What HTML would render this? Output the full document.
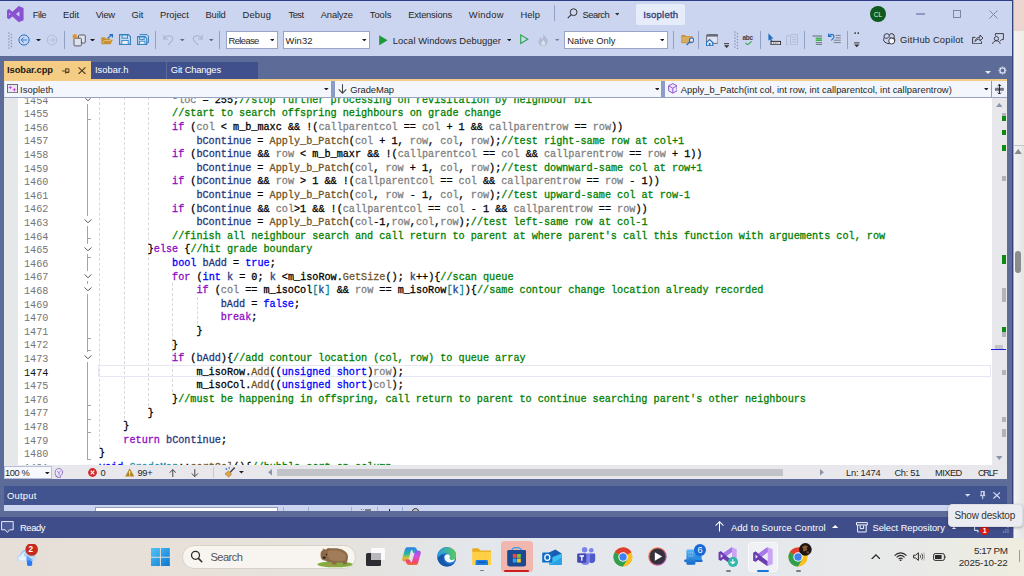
<!DOCTYPE html>
<html lang="en"><head><meta charset="utf-8"><title>Isopleth - Microsoft Visual Studio</title>
<style>
html,body{margin:0;padding:0;}
body{width:1024px;height:576px;overflow:hidden;background:#f3f0ec;font-family:'Liberation Sans',sans-serif;}
#root{position:relative;width:1024px;height:576px;overflow:hidden;}
#root>div,#root>svg,#root>span{position:absolute;display:block;}
.t{white-space:pre;line-height:20px;height:20px;}
#code{position:absolute;left:0;top:0;width:1024px;height:576px;font-family:'Liberation Mono',monospace;font-size:10.17px;-webkit-text-stroke:0.28px;}
#clip{position:absolute;left:4px;top:97px;width:988px;height:368.3px;overflow:hidden;clip-path:inset(1.2px 0 0 0);}
.ln,.cl{position:absolute;white-space:pre;line-height:20px;height:20px;}
.ln{color:#757575;-webkit-text-stroke:0;}
.cl{color:#000;}
.k{color:#8f08c4}.b{color:#0000ff}.p{color:#808080}.v{color:#1f377f}.f{color:#74531f}.c{color:#008000}.y{color:#2b91af}.o{color:#008b8b}

</style></head>
<body>
<div id="root">
<div style="left:1013px;top:0px;width:11px;height:31.4px;background:#eed6d0;"></div>
<div style="left:1013px;top:31.4px;width:11px;height:114px;background:linear-gradient(90deg,#f6f3f0,#efebe8);"></div>
<div style="left:1013px;top:145.2px;width:11px;height:393px;background:linear-gradient(90deg,#f5f5f5,#e4e4e4);"></div>
<div style="left:1013px;top:144.8px;width:11px;height:0.9px;background:#c4c4c4;"></div>
<div style="left:1014.8px;top:250.8px;width:6.4px;height:22.5px;background:#8c8c8c;border-radius:3.2px;"></div>
<svg style="left:1013.8px;top:148.6px;" width="8.4" height="5.6" viewBox="0 0 8.4 5.6"><path d="M0 5.6L4.2 0L8.4 5.6Z" fill="#8a8a8a"/></svg>
<div style="left:0px;top:0px;width:1013px;height:56px;background:#ccd5f0;"></div>
<div style="left:0px;top:0px;width:1013px;height:1.2px;background:#2c3f86;"></div>
<div style="left:0px;top:56px;width:1013px;height:482px;background:#5d6b99;"></div>
<div style="left:1011.9px;top:0px;width:1.2px;height:537.6px;background:#33437c;"></div>
<div style="left:1013px;top:0px;width:0.8px;height:537.6px;background:#a4a9bc;"></div>
<div style="left:3.5px;top:61px;width:87.2px;height:19.6px;background:#f5cc84;"></div>
<div style="left:91.2px;top:62px;width:74.8px;height:17px;background:#40508d;"></div>
<div style="left:167px;top:62px;width:90.5px;height:17px;background:#40508d;"></div>
<div style="left:3.5px;top:79px;width:1003px;height:1.7px;background:#f5cc84;"></div>
<div style="left:3.5px;top:80.7px;width:1003px;height:17.2px;background:#f3f6fd;"></div>
<div style="left:3.5px;top:96.9px;width:1003px;height:1.3px;background:#98a3c2;"></div>
<div style="left:330.6px;top:80.7px;width:4.3px;height:16px;background:#8b9cc6;"></div>
<div style="left:661.1px;top:80.7px;width:3.6px;height:16px;background:#8b9cc6;"></div>
<div style="left:990.6px;top:80.7px;width:1.6px;height:16px;background:#8c99c0;"></div>
<div style="left:992.2px;top:80.7px;width:14.3px;height:16px;background:#eef1fb;"></div>
<div style="left:3.5px;top:80.7px;width:1px;height:16px;background:#dfe5f5;"></div>
<div style="left:3.5px;top:97.9px;width:988.5px;height:367.6px;background:#ffffff;"></div>
<div style="left:3.5px;top:97.9px;width:14px;height:367.6px;background:#e6e7e8;"></div>
<div style="left:992px;top:97.9px;width:14.5px;height:367.6px;background:#e8e8ec;"></div>
<div style="left:3.5px;top:465.3px;width:1003px;height:14px;background:#e8e8ec;"></div>
<div style="left:4px;top:466px;width:47.5px;height:12.6px;background:#f6f8fd;border:1px solid #b8c0d8;box-sizing:border-box;"></div>
<div style="left:277px;top:469px;width:506px;height:7px;background:#c2c3c9;"></div>
<div style="left:3.5px;top:486.2px;width:1003px;height:18.5px;background:#41548f;"></div>
<div style="left:3.5px;top:504.7px;width:1003px;height:6.6px;background:#ccd5f0;"></div>
<div style="left:94.5px;top:507px;width:183.5px;height:4.3px;background:#ffffff;border:1px solid #8e9bbc;border-bottom:none;box-sizing:border-box;"></div>
<div style="left:0px;top:517.2px;width:1013px;height:20.4px;background:#3f4e8b;"></div>
<div style="left:0px;top:537.6px;width:1024px;height:38.4px;background:linear-gradient(90deg,#e5dfd7 0%,#e7e1d9 20%,#e5e3df 36%,#e3e6ea 46%,#e5e8ec 75%,#e9eae8 90%,#efedde 100%);"></div>
<div style="left:553.9px;top:5px;width:1px;height:15.8px;background:#8fa1c6;"></div>
<div style="left:636.3px;top:3.9px;width:48.8px;height:20.8px;background:#e7ecfb;border-radius:2px;"></div>
<div style="left:916px;top:13.3px;width:8.5px;height:1.3px;background:#8c9ac4;"></div>
<div style="left:953px;top:9.8px;width:8.4px;height:8.4px;background:transparent;border:1px solid #7d86a3;box-sizing:border-box;"></div>
<svg style="left:989px;top:10px;" width="9" height="9" viewBox="0 0 9 9"><path d="M0.5 0.5L8.5 8.5M8.5 0.5L0.5 8.5" stroke="#7d86a3" stroke-width="1" fill="none"/></svg>
<div style="left:870.2px;top:6px;width:16px;height:16px;background:#0f5a1e;border-radius:50%;"></div>
<div style="left:226px;top:30.8px;width:51.5px;height:18.2px;background:#ffffff;border:1px solid #98a4c6;box-sizing:border-box;"></div>
<div style="left:283px;top:30.8px;width:87px;height:18.2px;background:#ffffff;border:1px solid #98a4c6;box-sizing:border-box;"></div>
<div style="left:564px;top:30.8px;width:104px;height:18.2px;background:#ffffff;border:1px solid #98a4c6;box-sizing:border-box;"></div>
<div style="left:63.5px;top:31px;width:1px;height:17.5px;background:#8fa1c6;"></div>
<div style="left:154.5px;top:31px;width:1px;height:17.5px;background:#8fa1c6;"></div>
<div style="left:219.0px;top:31px;width:1px;height:17.5px;background:#8fa1c6;"></div>
<div style="left:673.0px;top:31px;width:1px;height:17.5px;background:#8fa1c6;"></div>
<div style="left:698.0px;top:31px;width:1px;height:17.5px;background:#8fa1c6;"></div>
<div style="left:760.0px;top:31px;width:1px;height:17.5px;background:#8fa1c6;"></div>
<div style="left:803.5px;top:31px;width:1px;height:17.5px;background:#8fa1c6;"></div>
<div style="left:847.0px;top:31px;width:1px;height:17.5px;background:#8fa1c6;"></div>
<div style="left:181.6px;top:544.6px;width:174.7px;height:24.2px;background:#f8f4ef;border-radius:12.2px;border:1px solid #d9d2c8;box-sizing:border-box;"></div>
<svg style="left:7px;top:5.8px;" width="17" height="16.2" viewBox="0 0 17 16.2"><path fill-rule="evenodd" fill="#8a52d2" d="M11.7 0L16.6 2V14.2L11.7 16.2L5.4 10.4L2 13.2L0 12V4.2L2 3L5.4 5.8Z M12.4 5.5V10.7L9 8.1Z M2 6.9L3.4 8.1L2 9.3Z"/></svg>
<svg style="left:566.5px;top:8px;" width="11" height="11" viewBox="0 0 11 11"><circle cx="6.6" cy="4.2" r="3.4" fill="none" stroke="#333" stroke-width="1"/><path d="M4.2 6.6L0.8 10.2" stroke="#333" stroke-width="1.1"/></svg>
<svg style="left:614.7px;top:13.3px;" width="4.6" height="2.4" viewBox="0 0 4.6 2.4"><path d="M0 0H4.6L2.3 2.4Z" fill="#333"/></svg>
<svg style="left:8.2px;top:31.5px;" width="5" height="17.0" viewBox="0 0 5 17.0"><rect x="0.3" y="0.4" width="1.3" height="1.3" fill="#8690b6"/><rect x="2.8" y="1.9" width="1.3" height="1.3" fill="#8690b6"/><rect x="0.3" y="3.4" width="1.3" height="1.3" fill="#8690b6"/><rect x="2.8" y="4.9" width="1.3" height="1.3" fill="#8690b6"/><rect x="0.3" y="6.4" width="1.3" height="1.3" fill="#8690b6"/><rect x="2.8" y="7.9" width="1.3" height="1.3" fill="#8690b6"/><rect x="0.3" y="9.4" width="1.3" height="1.3" fill="#8690b6"/><rect x="2.8" y="10.9" width="1.3" height="1.3" fill="#8690b6"/><rect x="0.3" y="12.4" width="1.3" height="1.3" fill="#8690b6"/><rect x="2.8" y="13.9" width="1.3" height="1.3" fill="#8690b6"/><rect x="0.3" y="15.4" width="1.3" height="1.3" fill="#8690b6"/><rect x="2.8" y="16.9" width="1.3" height="1.3" fill="#8690b6"/></svg>
<svg style="left:17.5px;top:33.5px;" width="12" height="12" viewBox="0 0 12 12"><circle cx="6" cy="6" r="5.1" fill="none" stroke="#1f6fc0" stroke-width="1"/><path d="M9 6H3.4M5.8 3.4L3.2 6L5.8 8.6" fill="none" stroke="#1f6fc0" stroke-width="0.9"/></svg>
<svg style="left:35.5px;top:38.6px;" width="5" height="2.6" viewBox="0 0 5 2.6"><path d="M0 0H5L2.5 2.6Z" fill="#1e1e1e"/></svg>
<svg style="left:46px;top:33.5px;" width="12" height="12" viewBox="0 0 12 12"><circle cx="6" cy="6" r="4.8" fill="none" stroke="#b3bcd6" stroke-width="1"/><path d="M3.2 6H8.4M6.4 3.8L8.6 6L6.4 8.2" fill="none" stroke="#b3bcd6" stroke-width="1"/></svg>
<svg style="left:71.5px;top:33px;" width="14.5" height="13.5" viewBox="0 0 14.5 13.5"><rect x="6.5" y="2" width="6.8" height="8" rx="1" fill="#dfe3f0" stroke="#5b5b66" stroke-width="1"/><rect x="2" y="5.2" width="7.4" height="7.7" rx="1" fill="#dfe3f0" stroke="#5b5b66" stroke-width="1"/><path d="M2.8 0.2L3.4 1.8L5 1.2L4.4 2.8L6 3.4L4.4 4L5 5.6L3.4 5L2.8 6.6L2.2 5L0.6 5.6L1.2 4L-0.4 3.4L1.2 2.8L0.6 1.2L2.2 1.8Z" fill="#d9932b"/></svg>
<svg style="left:89.8px;top:38.7px;" width="5" height="2.6" viewBox="0 0 5 2.6"><path d="M0 0H5L2.5 2.6Z" fill="#1e1e1e"/></svg>
<svg style="left:100.5px;top:33.5px;" width="12.5" height="11" viewBox="0 0 12.5 11"><path d="M0.3 10.2V3.2H3.6L4.8 4.4H9.2V5.8H11.8L9.6 10.2Z" fill="#c8902e"/><path d="M1.4 9.4L3.2 6.6H10" stroke="#e9c98a" stroke-width="0.8" fill="none"/><path d="M6.6 4.2L11 0.8M8.4 0.6H11.4V3.4" stroke="#2a6fc0" stroke-width="1.2" fill="none"/></svg>
<svg style="left:119px;top:34px;" width="12" height="11" viewBox="0 0 12 11"><path d="M0.6 0.6H9.4L11.4 2.6V10.4H0.6Z" fill="#cfe0f4" stroke="#2f7fc1" stroke-width="1.1"/><rect x="3" y="0.8" width="5.6" height="3.4" fill="none" stroke="#2f7fc1" stroke-width="0.9"/><rect x="2.8" y="6.4" width="6.4" height="4" fill="#e8f0fa" stroke="#2f7fc1" stroke-width="0.9"/></svg>
<svg style="left:137px;top:34px;" width="12.2" height="11.2" viewBox="0 0 12.2 11.2"><path d="M2.6 0.6H10L11.6 2.2V8.6H10" fill="none" stroke="#2f7fc1" stroke-width="1"/><path d="M0.6 2.6H8L9.8 4.4V10.6H0.6Z" fill="#cfe0f4" stroke="#2f7fc1" stroke-width="1.1"/><rect x="2.6" y="2.8" width="4.6" height="2.6" fill="none" stroke="#2f7fc1" stroke-width="0.9"/><rect x="2.4" y="7.2" width="5.6" height="3.2" fill="#e8f0fa" stroke="#2f7fc1" stroke-width="0.9"/></svg>
<svg style="left:162.5px;top:33.5px;" width="11" height="12" viewBox="0 0 11 12"><path d="M0.8 0.8V5H5" fill="none" stroke="#aab3cc" stroke-width="1.1"/><path d="M0.9 4.9C3 1.2 8 0.6 9.6 3.8C10.6 6.2 8 8.4 4.8 11" fill="none" stroke="#aab3cc" stroke-width="1.1"/></svg>
<svg style="left:180.39999999999998px;top:38.9px;" width="4.6" height="2.4" viewBox="0 0 4.6 2.4"><path d="M0 0H4.6L2.3 2.4Z" fill="#6a6a72"/></svg>
<svg style="left:191.5px;top:33.5px;" width="11" height="12" viewBox="0 0 11 12"><path d="M10.2 0.8V5H6" fill="none" stroke="#aab3cc" stroke-width="1.1"/><path d="M10.1 4.9C8 1.2 3 0.6 1.4 3.8C0.4 6.2 3 8.4 6.2 11" fill="none" stroke="#aab3cc" stroke-width="1.1"/></svg>
<svg style="left:209.0px;top:38.9px;" width="4.6" height="2.4" viewBox="0 0 4.6 2.4"><path d="M0 0H4.6L2.3 2.4Z" fill="#6a6a72"/></svg>
<svg style="left:269.7px;top:39.0px;" width="4.6" height="2.4" viewBox="0 0 4.6 2.4"><path d="M0 0H4.6L2.3 2.4Z" fill="#1e1e1e"/></svg>
<svg style="left:362.3px;top:39.0px;" width="4.6" height="2.4" viewBox="0 0 4.6 2.4"><path d="M0 0H4.6L2.3 2.4Z" fill="#1e1e1e"/></svg>
<svg style="left:659.9000000000001px;top:39.0px;" width="4.6" height="2.4" viewBox="0 0 4.6 2.4"><path d="M0 0H4.6L2.3 2.4Z" fill="#1e1e1e"/></svg>
<svg style="left:379px;top:34.8px;" width="9" height="10.6" viewBox="0 0 9 10.6"><path d="M0.2 0.2L8.6 5.3L0.2 10.4Z" fill="#1b9a3a"/></svg>
<svg style="left:506.7px;top:38.599999999999994px;" width="4.6" height="2.4" viewBox="0 0 4.6 2.4"><path d="M0 0H4.6L2.3 2.4Z" fill="#1e1e1e"/></svg>
<svg style="left:519.5px;top:34.3px;" width="9" height="10.4" viewBox="0 0 9 10.4"><path d="M0.7 0.9L7.8 5.2L0.7 9.5Z" fill="none" stroke="#2aa34a" stroke-width="1.1"/></svg>
<svg style="left:537px;top:32.8px;" width="12.5" height="13.6" viewBox="0 0 12.5 13.6"><path d="M6.4 0.4C7 3 9.6 4 10.6 6.6C11.6 9.6 9.6 13 6.2 13C2.8 13 0.8 10.4 1.6 7.4C2 6 3 5.4 3.4 4.2C4.4 5 4.6 6 4.4 7C6 5.6 6.8 3 6.4 0.4Z" fill="#b4bcd2"/><path d="M6.2 12.4C4.6 12.4 3.8 11 4.4 9.6C5 8.6 6 8.2 6.2 7C7.6 8.4 8.6 9.6 8 11C7.6 12 7 12.4 6.2 12.4Z" fill="#dde2f0"/></svg>
<svg style="left:554.9px;top:38.9px;" width="4.2" height="2.2" viewBox="0 0 4.2 2.2"><path d="M0 0H4.2L2.1 2.2Z" fill="#7a7f90"/></svg>
<svg style="left:681px;top:34.4px;" width="13" height="11.6" viewBox="0 0 13 11.6"><path d="M0.3 9.2V0.9H4L5 2H11.6V9.2Z" fill="#c9923a"/><rect x="1.2" y="2.8" width="9.6" height="5.6" fill="#d9ac63"/><circle cx="10.6" cy="6.2" r="2.2" fill="#dfe8f6" stroke="#2a6fc0" stroke-width="1.1"/><path d="M9 7.8L5.6 11" stroke="#2a6fc0" stroke-width="1.3"/></svg>
<svg style="left:705.8px;top:34.2px;" width="12.6" height="12" viewBox="0 0 12.6 12"><rect x="0.6" y="0.6" width="11.4" height="8.8" rx="1" fill="#e2e5f0" stroke="#666a74" stroke-width="1"/><rect x="0.6" y="0.6" width="11.4" height="2" fill="#666a74"/><path d="M0.4 8.6L3.6 5.6L6.8 8.6V11.8H0.4Z" fill="#dfe8f6" stroke="#1f6fc0" stroke-width="1.1"/><rect x="2.8" y="9" width="1.6" height="2.6" fill="#1f6fc0"/></svg>
<svg style="left:724px;top:42.6px;" width="5.4" height="5.2" viewBox="0 0 5.4 5.2"><rect x="0" y="0.2" width="5.4" height="1" fill="#333"/><path d="M0 2.2H5.4L2.7 5Z" fill="#333"/></svg>
<svg style="left:734px;top:31px;" width="5" height="17.6" viewBox="0 0 5 17.6"><rect x="0.3" y="0.4" width="1.3" height="1.3" fill="#8690b6"/><rect x="2.8" y="1.9" width="1.3" height="1.3" fill="#8690b6"/><rect x="0.3" y="3.4" width="1.3" height="1.3" fill="#8690b6"/><rect x="2.8" y="4.9" width="1.3" height="1.3" fill="#8690b6"/><rect x="0.3" y="6.4" width="1.3" height="1.3" fill="#8690b6"/><rect x="2.8" y="7.9" width="1.3" height="1.3" fill="#8690b6"/><rect x="0.3" y="9.4" width="1.3" height="1.3" fill="#8690b6"/><rect x="2.8" y="10.9" width="1.3" height="1.3" fill="#8690b6"/><rect x="0.3" y="12.4" width="1.3" height="1.3" fill="#8690b6"/><rect x="2.8" y="13.9" width="1.3" height="1.3" fill="#8690b6"/><rect x="0.3" y="15.4" width="1.3" height="1.3" fill="#8690b6"/><rect x="2.8" y="16.9" width="1.3" height="1.3" fill="#8690b6"/></svg>
<svg style="left:745.4px;top:40.8px;" width="7" height="4.4" viewBox="0 0 7 4.4"><path d="M0.5 1.8L2.6 3.8L6.5 0.4" fill="none" stroke="#2aa34a" stroke-width="1.1"/></svg>
<svg style="left:767.5px;top:33px;" width="13.2" height="12.2" viewBox="0 0 13.2 12.2"><path d="M0.4 0.3L5.4 5.6L3.2 5.8L4.4 8.2L3.2 8.8L2 6.4L0.4 7.8Z" fill="#1f6fc0"/><rect x="3" y="8.4" width="9.6" height="3.4" fill="#e8e8ee" stroke="#2e2e34" stroke-width="1"/><path d="M5 10.1H10.8" stroke="#55555c" stroke-width="1" stroke-dasharray="1 0.8"/></svg>
<svg style="left:786px;top:33.6px;" width="12" height="11.4" viewBox="0 0 12 11.4"><path d="M2.6 0.8V2H0.6V10.6H2.6" fill="none" stroke="#b3bcd4" stroke-width="1"/><rect x="4.6" y="0.6" width="7" height="10.2" fill="none" stroke="#b3bcd4" stroke-width="1"/><path d="M6 3.2H10.4M6 5.6H10.4M6 8H10.4" stroke="#b3bcd4" stroke-width="0.9"/></svg>
<svg style="left:811.8px;top:34.6px;" width="10.6" height="10.4" viewBox="0 0 10.6 10.4"><rect x="0.4" y="0.5" width="10" height="1" fill="#666a76"/><rect x="3.8" y="2.6" width="6.6" height="3.4" fill="#3cb04a"/><path d="M4 4.3H10.4" stroke="#c8eccc" stroke-width="0.6" stroke-dasharray="1.6 0.6"/><rect x="3.8" y="7.2" width="6.6" height="1" fill="#666a76"/><rect x="3.8" y="9.2" width="6.6" height="1" fill="#666a76"/></svg>
<svg style="left:828.4px;top:33.4px;" width="13.2" height="11.6" viewBox="0 0 13.2 11.6"><path d="M0.6 0.6V3.4H3.6" fill="none" stroke="#1f6fc0" stroke-width="1.1"/><path d="M0.8 3.2C2.4 0.6 5.8 0.8 6 3.4C6 5.2 4.4 6 3.2 7.4" fill="none" stroke="#1f6fc0" stroke-width="1.1"/><path d="M7.6 2.4H12.8M7.6 4.8H12.8M5.8 7.2H12.8M5.8 9.6H12.8" stroke="#70747f" stroke-width="0.9"/></svg>
<svg style="left:854.4px;top:32.4px;" width="5.6" height="15.6" viewBox="0 0 5.6 15.6"><rect x="0.5" y="0.3" width="1.3" height="1.6" fill="#222"/><rect x="3.6" y="0.3" width="1.3" height="1.6" fill="#222"/><rect x="0.1" y="10.4" width="5.4" height="1" fill="#333"/><path d="M0.1 12.4H5.5L2.8 15.2Z" fill="#333"/></svg>
<svg style="left:883px;top:33.3px;" width="13" height="11.6" viewBox="0 0 13 11.6"><path d="M1.4 5C0.6 3 1.4 0.8 3.6 0.7C5.4 0.6 6 1.6 6.2 2.6C6.4 1.6 7 0.6 8.8 0.7C11 0.8 11.8 3 11 5C12 5.8 12 7.2 11.6 8C10 10 8 10.6 6.2 10.6C4.4 10.6 2.4 10 0.8 8C0.4 7.2 0.4 5.8 1.4 5Z" fill="none" stroke="#2e2e34" stroke-width="1"/><path d="M1.6 5C3 5.6 5.4 5.4 6.2 3.4C7 5.4 9.4 5.6 10.8 5" fill="none" stroke="#2e2e34" stroke-width="0.9"/><circle cx="8.7" cy="8" r="3" fill="#f4f6fc" stroke="#2e2e34" stroke-width="0.9"/></svg>
<svg style="left:971.6px;top:34px;" width="11.6" height="10.4" viewBox="0 0 11.6 10.4"><path d="M3.4 3.4H0.6V9.8H9.4V7.4" fill="none" stroke="#3a3a42" stroke-width="1"/><path d="M3 7.6C3.4 4.8 5.4 3.2 8 3.2V1L11 4L8 7V5C6 5 4.2 5.8 3 7.6Z" fill="none" stroke="#3a3a42" stroke-width="0.95"/></svg>
<svg style="left:992.2px;top:32.8px;" width="12" height="11.6" viewBox="0 0 12 11.6"><path d="M3.4 2.8V0.6H11.4V6.6H9.6L7.8 8.4" fill="none" stroke="#3a3a42" stroke-width="0.95"/><circle cx="4.4" cy="5.6" r="2.1" fill="none" stroke="#3a3a42" stroke-width="0.95"/><path d="M0.5 11.4C0.8 8.8 2.6 7.8 4.4 7.8C6.2 7.8 8 8.8 8.3 11.4" fill="none" stroke="#3a3a42" stroke-width="0.95"/></svg>
<svg style="left:61.8px;top:68.2px;" width="7.8" height="6" viewBox="0 0 7.8 6"><path d="M0.2 3H3.6M3.7 0.3V5.7M3.8 0.9H6.9V4.5H3.8" fill="none" stroke="#4e3c1c" stroke-width="1"/><rect x="3.8" y="3.6" width="3.2" height="1.2" fill="#4e3c1c"/></svg>
<svg style="left:78px;top:66.8px;" width="8" height="7.4" viewBox="0 0 8 7.4"><path d="M0.5 0.4L7.5 7M7.5 0.4L0.5 7" stroke="#4e3c1c" stroke-width="1.1" fill="none"/></svg>
<svg style="left:984.9px;top:70.9px;" width="6" height="3" viewBox="0 0 6 3"><path d="M0 0H6L3.0 3Z" fill="#e2e8f8"/></svg>
<svg style="left:997.5px;top:66.4px;" width="9" height="9" viewBox="0 0 9 9"><circle cx="4.5" cy="4.5" r="2.5" fill="none" stroke="#e4e9f8" stroke-width="1.1"/><path d="M7.30 4.50L8.40 4.50" stroke="#e4e9f8" stroke-width="1.5"/><path d="M6.48 6.48L7.26 7.26" stroke="#e4e9f8" stroke-width="1.5"/><path d="M4.50 7.30L4.50 8.40" stroke="#e4e9f8" stroke-width="1.5"/><path d="M2.52 6.48L1.74 7.26" stroke="#e4e9f8" stroke-width="1.5"/><path d="M1.70 4.50L0.60 4.50" stroke="#e4e9f8" stroke-width="1.5"/><path d="M2.52 2.52L1.74 1.74" stroke="#e4e9f8" stroke-width="1.5"/><path d="M4.50 1.70L4.50 0.60" stroke="#e4e9f8" stroke-width="1.5"/><path d="M6.48 2.52L7.26 1.74" stroke="#e4e9f8" stroke-width="1.5"/></svg>
<svg style="left:6.8px;top:84px;" width="11" height="9.2" viewBox="0 0 11 9.2"><rect x="0.5" y="0.5" width="10" height="8.2" fill="#e9e9ee" stroke="#6a6a70" stroke-width="1"/><path d="M3.4 1.4L4 3L5.6 3.4L4 3.9L3.4 5.6L2.8 3.9L1.2 3.4L2.8 3Z M7.4 3.6L8 5.2L9.6 5.7L8 6.2L7.4 7.9L6.8 6.2L5.2 5.7L6.8 5.2Z" fill="#c23fe0"/></svg>
<svg style="left:324.3px;top:87.85px;" width="4.6" height="2.5" viewBox="0 0 4.6 2.5"><path d="M0 0H4.6L2.3 2.5Z" fill="#1e1e1e"/></svg>
<svg style="left:337.6px;top:84.2px;" width="9" height="10" viewBox="0 0 9 10"><path d="M4.5 0.2V9M0.7 5.4L4.5 9.2L8.3 5.4" fill="none" stroke="#444" stroke-width="1.05"/></svg>
<svg style="left:654.7px;top:87.85px;" width="4.6" height="2.5" viewBox="0 0 4.6 2.5"><path d="M0 0H4.6L2.3 2.5Z" fill="#1e1e1e"/></svg>
<svg style="left:667.8px;top:83.4px;" width="9.6" height="10.8" viewBox="0 0 9.6 10.8"><path d="M4.8 0.6L9 2.8V7.8L4.8 10.2L0.6 7.8V2.8Z" fill="#ebe7f6" stroke="#8a4fd0" stroke-width="0.95"/><path d="M0.8 2.9L4.8 5.2L8.8 2.9 M4.8 5.2V10" fill="none" stroke="#8a4fd0" stroke-width="0.9"/></svg>
<svg style="left:983.5px;top:87.85px;" width="4.6" height="2.5" viewBox="0 0 4.6 2.5"><path d="M0 0H4.6L2.3 2.5Z" fill="#1e1e1e"/></svg>
<svg style="left:995.2px;top:83.6px;" width="8.8" height="10.4" viewBox="0 0 8.8 10.4"><rect x="0" y="3.8" width="8.8" height="3" fill="#72757f"/><path d="M4.4 0.3V10.3" stroke="#1c1c1c" stroke-width="1"/><path d="M2.7 2L4.4 0.3L6.1 2M2.7 8.6L4.4 10.3L6.1 8.6" fill="none" stroke="#1c1c1c" stroke-width="0.9"/></svg>
<svg style="left:995.8px;top:103.2px;" width="6.6" height="4" viewBox="0 0 6.6 4"><path d="M0 4L3.3 0L6.6 4Z" fill="#8c94ac"/></svg>
<svg style="left:995.8px;top:456.3px;" width="6.6" height="4" viewBox="0 0 6.6 4"><path d="M0 0H6.6L3.3 4Z" fill="#8c94ac"/></svg>
<div style="left:1001.8px;top:112.6px;width:4.5px;height:3.8000000000000114px;background:#b4b4b8;"></div>
<div style="left:1001.8px;top:116.4px;width:4.5px;height:4.8999999999999915px;background:#0c8a12;"></div>
<div style="left:1001.8px;top:130px;width:4.5px;height:5px;background:#0c8a12;"></div>
<div style="left:1001.8px;top:145.2px;width:4.5px;height:5.600000000000023px;background:#0c8a12;"></div>
<div style="left:1001.8px;top:176px;width:4.5px;height:4.599999999999994px;background:#b4b4b8;"></div>
<div style="left:1001.8px;top:254.6px;width:4.5px;height:9.200000000000017px;background:#0c8a12;"></div>
<div style="left:1001.8px;top:288.3px;width:4.5px;height:13.399999999999977px;background:#b4b4b8;"></div>
<div style="left:1001.8px;top:326.9px;width:4.5px;height:5.2000000000000455px;background:#0c8a12;"></div>
<div style="left:1001.8px;top:332.1px;width:4.5px;height:4.899999999999977px;background:#b4b4b8;"></div>
<div style="left:1001.8px;top:370px;width:4.5px;height:5.100000000000023px;background:#b4b4b8;"></div>
<div style="left:1001.8px;top:417.2px;width:4.5px;height:4.5px;background:#b4b4b8;"></div>
<div style="left:1001.8px;top:429px;width:4.5px;height:8.399999999999977px;background:#b4b4b8;"></div>
<div style="left:994.8px;top:345.1px;width:8.4px;height:3.6px;background:#c4c4c8;"></div>
<div style="left:991.4px;top:348.6px;width:14.9px;height:1.7px;background:#1c1cf0;"></div>
<svg style="left:45.0px;top:471.75px;" width="4.6" height="2.5" viewBox="0 0 4.6 2.5"><path d="M0 0H4.6L2.3 2.5Z" fill="#1e1e1e"/></svg>
<svg style="left:54px;top:467.8px;" width="9.6" height="10" viewBox="0 0 9.6 10"><path d="M4.8 0.6C2.6 0.6 1.2 2.2 1.2 4C1.2 5 1.6 5.6 1 6.6L2 7V8.4H3.4V9.6H6.4V7.6C7.8 6.8 8.6 5.6 8.6 4C8.6 2.2 7 0.6 4.8 0.6Z" fill="#ece6f6" stroke="#8a6cc4" stroke-width="0.9"/><path d="M3.2 3.2L5 4.8L6.6 2.8M5 4.8V7.4" fill="none" stroke="#8a6cc4" stroke-width="0.8"/></svg>
<svg style="left:88.3px;top:467.9px;" width="9" height="9" viewBox="0 0 9 9"><circle cx="4.5" cy="4.5" r="4.4" fill="#d12a2a"/><path d="M2.7 2.7L6.3 6.3M6.3 2.7L2.7 6.3" stroke="#fff" stroke-width="1.1"/></svg>
<svg style="left:124.8px;top:468.2px;" width="9.4" height="8.6" viewBox="0 0 9.4 8.6"><path d="M4.7 0.2L9.2 8.4H0.2Z" fill="#b5851c"/><rect x="4.2" y="3" width="1" height="3" fill="#fff"/><rect x="4.2" y="6.7" width="1" height="1" fill="#fff"/></svg>
<svg style="left:168.6px;top:468.6px;" width="7.6" height="8.2" viewBox="0 0 7.6 8.2"><path d="M3.8 8V0.6M0.6 3.8L3.8 0.6L7 3.8" fill="none" stroke="#444" stroke-width="1"/></svg>
<svg style="left:191.4px;top:468.6px;" width="7.6" height="8.2" viewBox="0 0 7.6 8.2"><path d="M3.8 0.2V7.6M0.6 4.4L3.8 7.6L7 4.4" fill="none" stroke="#444" stroke-width="1"/></svg>
<div style="left:212.6px;top:467px;width:1px;height:11px;background:#c6c8d2;"></div>
<svg style="left:224px;top:467px;" width="11.4" height="10.6" viewBox="0 0 11.4 10.6"><path d="M10.6 0.6L6 5.6" stroke="#4a4a50" stroke-width="1.5"/><path d="M4.4 4L7.6 7L4.8 10.2L1 6.8Z" fill="#dda64e" stroke="#b07a24" stroke-width="0.7"/><path d="M2.4 1.2V3M1.5 2.1H3.3M5.2 0.3V1.7M4.5 1H5.9" stroke="#2a6fc0" stroke-width="0.8"/></svg>
<svg style="left:238.79999999999998px;top:471.3px;" width="4.8" height="2.6" viewBox="0 0 4.8 2.6"><path d="M0 0H4.8L2.4 2.6Z" fill="#1e1e1e"/></svg>
<svg style="left:267.8px;top:469.4px;" width="4" height="6.6" viewBox="0 0 4 6.6"><path d="M4 0V6.6L0 3.3Z" fill="#8c94ac"/></svg>
<svg style="left:820.4px;top:469.4px;" width="4" height="6.6" viewBox="0 0 4 6.6"><path d="M0 0V6.6L4 3.3Z" fill="#8c94ac"/></svg>
<svg style="left:964.8px;top:493.8px;" width="5.2" height="2.8" viewBox="0 0 5.2 2.8"><path d="M0 0H5.2L2.6 2.8Z" fill="#d4dbf2"/></svg>
<svg style="left:980.2px;top:491.4px;" width="5.4" height="8.4" viewBox="0 0 5.4 8.4"><path d="M0.8 0.5H4.6M1.2 0.5V4.6M4.2 0.5V4.6M0.1 4.7H5.3M2.7 4.7V8.2" fill="none" stroke="#d4dbf2" stroke-width="1"/><rect x="3.2" y="0.5" width="1.2" height="4.2" fill="#d4dbf2"/></svg>
<svg style="left:992.8px;top:491.8px;" width="7.6" height="6.8" viewBox="0 0 7.6 6.8"><path d="M0.4 0.3L7.2 6.5M7.2 0.3L0.4 6.5" stroke="#d4dbf2" stroke-width="1.1"/></svg>
<div style="left:283.0px;top:507.4px;width:1px;height:3.9px;background:#9badd2;"></div>
<div style="left:308.0px;top:507.4px;width:1px;height:3.9px;background:#9badd2;"></div>
<div style="left:351.3px;top:507.4px;width:1px;height:3.9px;background:#9badd2;"></div>
<div style="left:376.8px;top:507.4px;width:1px;height:3.9px;background:#9badd2;"></div>
<div style="left:401.8px;top:507.4px;width:1px;height:3.9px;background:#9badd2;"></div>
<div style="left:360.6px;top:508.8px;width:1.4px;height:1.6px;background:#d03a2a;"></div>
<div style="left:362.6px;top:508.8px;width:1.4px;height:1.6px;background:#e08a2a;"></div>
<div style="left:364.6px;top:508.6px;width:6.4px;height:2.4px;background:#7c7c84;"></div>
<div style="left:388.6px;top:508.8px;width:1.4px;height:2.2px;background:#222;"></div>
<svg style="left:412px;top:507.8px;" width="7" height="3.5" viewBox="0 0 7 3.5"><path d="M0.3 3.5C0.8 1 2.4 0.5 3.5 0.5C4.6 0.5 6.2 1 6.7 3.5" fill="#bbb" stroke="#222" stroke-width="0.9"/></svg>
<svg style="left:1.2px;top:520.8px;" width="13" height="12.6" viewBox="0 0 13 12.6"><path d="M0.6 0.6H12.2V8.8H8.6L6.4 11.4L4.2 8.8H0.6Z" fill="#4a5b98" stroke="#e8ecfa" stroke-width="1"/></svg>
<svg style="left:715.2px;top:521.2px;" width="9" height="10.6" viewBox="0 0 9 10.6"><path d="M4.5 10.4V0.8M0.6 4.6L4.5 0.7L8.4 4.6" fill="none" stroke="#fff" stroke-width="1.05"/></svg>
<svg style="left:831.8px;top:525.2px;" width="6.4" height="3" viewBox="0 0 6.4 3"><path d="M0 3L3.2 0L6.4 3Z" fill="#fff"/></svg>
<svg style="left:856.2px;top:522.2px;" width="11.8" height="10.6" viewBox="0 0 11.8 10.6"><path d="M0.5 0.6H11.3V3H0.5Z M1.6 3V10H10.2V3" fill="none" stroke="#f0f3fc" stroke-width="1"/><path d="M4.2 3.4V6.6H7.6V3.4" fill="none" stroke="#f0f3fc" stroke-width="1"/></svg>
<svg style="left:950.6px;top:526.6px;" width="6" height="2.8" viewBox="0 0 6 2.8"><path d="M0 2.8L3 0L6 2.8Z" fill="#fff"/></svg>
<svg style="left:974.4px;top:526px;" width="6" height="7" viewBox="0 0 6 7"><path d="M0.6 0V4.4H4V6.4" fill="none" stroke="#f0f3fc" stroke-width="1"/></svg>
<div style="left:980.2px;top:526.4px;width:8.8px;height:8.8px;background:#e01a0c;border-radius:50%;"></div>
<svg style="left:1003.4px;top:527px;" width="6" height="7.4" viewBox="0 0 6 7.4"><g fill="#9aa6cc"><rect x="4.4" y="0" width="1.2" height="1.2"/><rect x="4.4" y="2.2" width="1.2" height="1.2"/><rect x="2.2" y="2.2" width="1.2" height="1.2"/><rect x="4.4" y="4.4" width="1.2" height="1.2"/><rect x="2.2" y="4.4" width="1.2" height="1.2"/><rect x="0" y="4.4" width="1.2" height="1.2"/></g></svg>
<svg style="left:15.5px;top:544px;" width="24" height="24" viewBox="0 0 24 24"><defs><linearGradient id="cl" x1="0" y1="0" x2="0" y2="1"><stop offset="0" stop-color="#9cc4f2"/><stop offset="1" stop-color="#cfe2f8"/></linearGradient></defs><path d="M4.4 17.6C1.6 17.6 0.2 15.6 0.8 13.6C1.2 12 2.6 11.2 4 11.2C4.4 8 7 5.8 10 5.8C13 5.8 15.2 7.6 16 10.2C18.4 10 20 11.6 20 13.8C20 16 18.4 17.6 16.2 17.6Z" fill="url(#cl)"/><path d="M5 16.4C3 16.4 2 15 2.4 13.8C2.8 12.6 4 12.2 5 12.4C5.6 9.4 7.6 7.6 10 7.4C8 9 7.6 11 8 12.6C9.6 12.4 10.6 13.4 10.6 14.6C10.6 15.8 9.8 16.4 8.6 16.4Z" fill="#eef5fd" opacity="0.85"/><path d="M10.8 13.4L16.2 17.4V20.4C16.2 22.6 11 22.6 11 20.4Z" fill="#2a7cf2"/><path d="M10.6 11.6L17.6 16.4H10.6Z" fill="#5aa2f6"/><circle cx="15.7" cy="5.5" r="6.3" fill="#c42b1c"/></svg>
<svg style="left:151.4px;top:547.7px;" width="18.8" height="18.6" viewBox="0 0 18.8 18.6"><defs><linearGradient id="wl" x1="0" y1="0" x2="1" y2="1"><stop offset="0" stop-color="#52c6f6"/><stop offset="1" stop-color="#0a74d2"/></linearGradient></defs><path d="M0 0H8.9V8.8H0Z M9.9 0H18.8V8.8H9.9Z M0 9.8H8.9V18.6H0Z M9.9 9.8H18.8V18.6H9.9Z" fill="url(#wl)"/></svg>
<svg style="left:189.6px;top:550.4px;" width="13" height="13" viewBox="0 0 13 13"><circle cx="5.5" cy="5.3" r="4" fill="none" stroke="#2a2a2a" stroke-width="1.25"/><path d="M8.4 8.4L11.8 11.8" stroke="#2a2a2a" stroke-width="1.5" stroke-linecap="round"/></svg>
<svg style="left:316px;top:546px;" width="38" height="23" viewBox="0 0 38 23"><ellipse cx="19" cy="18.4" rx="17.6" ry="2.9" fill="#7fae3e"/><ellipse cx="16" cy="19" rx="9" ry="1.4" fill="#9aa04a"/><path d="M4.6 9C4.2 5.4 6.6 3.2 9.6 3.4C11 2.2 14 2 17 2.2C23 2 29.4 3.6 31.4 8C32.6 10.8 32 14 30.6 16.4L30.6 18.4H27L26.6 16.4H20.6L20.4 18.4H16.4L16 16.2C13 16.4 10.6 16 9.2 14.6C6.4 14.6 4.4 12.6 4.6 9Z" fill="#8c6a48"/><path d="M12 5C18 3.4 26 4.4 29.4 8.6C30.4 11 29.6 13 28.6 14.4C24 15.4 17 15 13.6 13.4C12 11 11.6 7.4 12 5Z" fill="#a07c58"/><ellipse cx="8.2" cy="11.6" rx="1.5" ry="1.2" fill="#2e2018"/><circle cx="10.4" cy="8.6" r="0.8" fill="#2e2018"/><path d="M6.4 3.8L7.6 2.4L9 3.8Z M10.8 3.4L12.2 2L13.4 3.6Z" fill="#7a5a3c"/></svg>
<div style="left:371px;top:547.6px;width:14px;height:12.3px;background:#fbfbfc;border-radius:1.5px;"></div>
<div style="left:366.3px;top:552.9px;width:14.6px;height:12.7px;background:#2b2b31;border-radius:1.5px;"></div>
<div style="left:371px;top:552.9px;width:9.9px;height:7px;background:#b9b9bd;"></div>
<svg style="left:402px;top:547.4px;" width="19" height="18.2" viewBox="0 0 19 18.2"><defs><linearGradient id="cp1" x1="0" y1="0" x2="0" y2="1"><stop offset="0" stop-color="#2a7ef0"/><stop offset="0.45" stop-color="#28b8a0"/><stop offset="0.75" stop-color="#d8c030"/><stop offset="1" stop-color="#f08a28"/></linearGradient><linearGradient id="cp2" x1="0" y1="0" x2="0" y2="1"><stop offset="0" stop-color="#8a5af0"/><stop offset="0.4" stop-color="#d050e0"/><stop offset="0.8" stop-color="#f04868"/><stop offset="1" stop-color="#f07030"/></linearGradient></defs><path d="M5.2 0.2H12C13.6 0.2 14.4 1 14.8 2.4L15.8 6H11.2L10.4 3.6C10 2.8 9.2 2.8 9 3.6L6.6 12C6 13.8 5 14.6 3.2 14.6H2.6C0.6 14.6 -0.2 13 0.4 11.2L2.8 2.8C3.2 1.2 4 0.2 5.2 0.2Z" fill="url(#cp1)"/><path d="M13.8 18H7C5.4 18 4.6 17.2 4.2 15.8L3.4 12.6H7.8L8.6 14.6C9 15.4 9.8 15.4 10 14.6L12.4 6.2C13 4.4 14 3.6 15.8 3.6H16.4C18.4 3.6 19.2 5.2 18.6 7L16.2 15.4C15.8 17 15 18 13.8 18Z" fill="url(#cp2)"/></svg>
<svg style="left:436.6px;top:547px;" width="19.6" height="19.6" viewBox="0 0 19.6 19.6"><defs><linearGradient id="eg" x1="0" y1="0" x2="1" y2="0"><stop offset="0" stop-color="#2a9ae0"/><stop offset="1" stop-color="#58cc58"/></linearGradient></defs><circle cx="9.8" cy="9.8" r="9.7" fill="#1b74d2"/><path d="M1 6C3 1.6 7.4 0 11 0.2C16 0.6 19.4 4.4 19.4 9C19.4 11.6 17.6 13.2 15.2 13.2C13.2 13.2 12 12.4 12.6 11C13.6 9.4 12 6.2 8.6 6.2C5.6 6.2 2.6 7.6 1 10.6C0.4 9 0.4 7.4 1 6Z" fill="url(#eg)"/><path d="M6.6 10.6C6.2 14.6 9.4 17.4 13 17.4C15 17.4 16.8 16.8 18 15.6C16 18.4 13 19.6 10 19.6C4.6 19.6 1.2 15.6 0.6 11.6C2 8.6 5 7.2 7.8 7.4C7 8.2 6.6 9.4 6.6 10.6Z" fill="#1756a8"/><path d="M7.4 10.2C7.4 8.4 8.8 7.2 10.4 7.2C12.4 7.2 13.4 8.8 12.8 10.4C12.2 11.8 13.4 13 15.2 13C16.4 13 17.6 12.6 18.4 11.8C17.4 14.6 14.8 15.8 12.4 15.6C9.4 15.2 7.4 13 7.4 10.2Z" fill="#f3f6fa"/></svg>
<svg style="left:471.8px;top:548px;" width="19.6" height="17.4" viewBox="0 0 19.6 17.4"><path d="M0.2 1.4C0.2 0.6 0.6 0.2 1.4 0.2H6.4L8.4 2.4H18.4C19 2.4 19.4 2.8 19.4 3.4V5H0.2Z" fill="#e6ad1e"/><path d="M0.2 3.8H19.4V16.2C19.4 16.8 19 17.2 18.4 17.2H1.2C0.6 17.2 0.2 16.8 0.2 16.2Z" fill="#ffd046"/><path d="M3.6 17.2V13.6C3.6 12.6 4.2 12 5.2 12H14.4C15.4 12 16 12.6 16 13.6V17.2Z" fill="#1a7ce2"/><rect x="5.8" y="13.6" width="8" height="1.3" rx="0.6" fill="#0c5cb8"/></svg>
<div style="left:479.6px;top:569.9px;width:4.6px;height:1.5px;background:#7e7e82;border-radius:1px;"></div>
<div style="left:501px;top:541px;width:31.8px;height:31.2px;background:#f1b6ae;border-radius:3.5px;"></div>
<div style="left:504.1px;top:569.6px;width:25px;height:2.6px;background:#cc1c1c;border-radius:1px;"></div>
<svg style="left:506.8px;top:547px;" width="19.4" height="19.8" viewBox="0 0 19.4 19.8"><path d="M5 4C5 1.4 6.4 0.6 9.7 0.6C13 0.6 14.4 1.4 14.4 4" fill="none" stroke="#3c9ce8" stroke-width="1.3"/><path d="M0.2 4.6C0.2 3.6 0.8 3 1.8 3H17.6C18.6 3 19.2 3.6 19.2 4.6V16.8C19.2 18.6 18.2 19.4 16.6 19.4H2.8C1.2 19.4 0.2 18.6 0.2 16.8Z" fill="#1c4a92"/><rect x="5.8" y="7" width="3.7" height="3.9" fill="#f04a36"/><rect x="10.1" y="7" width="3.7" height="3.9" fill="#7cc040"/><rect x="5.8" y="11.6" width="3.7" height="3.9" fill="#28a4f0"/><rect x="10.1" y="11.6" width="3.7" height="3.9" fill="#fcc420"/></svg>
<svg style="left:542px;top:548.6px;" width="20" height="16.6" viewBox="0 0 20 16.6"><path d="M7 3.6L13.4 0.4L19.6 4.4V15C19.6 15.8 19 16.4 18.2 16.4H8.4C7.6 16.4 7 15.8 7 15Z" fill="#1a5cb4"/><path d="M7 9.4L19.6 4.4V15C19.6 15.8 19 16.4 18.2 16.4H7Z" fill="#3cc0f2"/><path d="M7 16.4L19.6 8.6V15C19.6 15.8 19 16.4 18.2 16.4Z" fill="#28a0e6"/><rect x="0.2" y="3.4" width="10.2" height="10.2" rx="1.2" fill="#0f6cc8"/><ellipse cx="5.3" cy="8.5" rx="2.5" ry="2.9" fill="none" stroke="#fff" stroke-width="1.3"/></svg>
<svg style="left:577.2px;top:547.4px;" width="18.4" height="18.2" viewBox="0 0 18.4 18.2"><circle cx="14.3" cy="3.3" r="2.3" fill="#7b83eb"/><circle cx="7.6" cy="2.7" r="2.7" fill="#7b83eb"/><path d="M11.6 6.6H17.4C18 6.6 18.2 7 18.2 7.4V12.6C18.2 15 16.6 16.2 14.8 16.2C13 16.2 11.6 15 11.6 12.6Z" fill="#5059c9"/><path d="M3.6 6.4H12C12.6 6.4 13 6.8 13 7.4V13.4C13 16.4 10.8 18 8.2 18C5.6 18 3.6 16.4 3.6 13.4Z" fill="#7b83eb"/><rect x="0.2" y="6.6" width="9.2" height="9.2" rx="1" fill="#4048b2"/><path d="M2.6 9H7M4.8 9V13.8" stroke="#fff" stroke-width="1.3" fill="none"/></svg>
<svg style="left:612.5px;top:546.7px;" width="20" height="20" viewBox="0 0 20 20"><circle cx="10" cy="10" r="9.6" fill="#f8c020"/><path d="M10 10L1.7 5.2A9.6 9.6 0 0 1 18.3 5.2Z" fill="#e04030"/><path d="M10 0.4A9.6 9.6 0 0 1 18.3 5.2H10Z" fill="#e04030"/><path d="M10 10L1.7 5.2A9.6 9.6 0 0 0 10 19.6L14.2 12.4Z" fill="#30a050"/><circle cx="10" cy="10" r="4.7" fill="#fff"/><circle cx="10" cy="10" r="3.7" fill="#4080f0"/></svg>
<svg style="left:648px;top:547.3px;" width="19" height="19" viewBox="0 0 19 19"><defs><linearGradient id="mp" x1="0" y1="0" x2="1" y2="1"><stop offset="0" stop-color="#f09030"/><stop offset="0.5" stop-color="#e85a70"/><stop offset="1" stop-color="#9a50e0"/></linearGradient></defs><circle cx="9.5" cy="9.5" r="9.3" fill="url(#mp)"/><circle cx="9.5" cy="9.5" r="8" fill="#33333b"/><path d="M6.8 5.2L14.2 9.5L6.8 13.8Z" fill="#fff"/></svg>
<svg style="left:683.6px;top:548px;" width="19" height="17" viewBox="0 0 19 17"><rect x="0.2" y="11.6" width="18.4" height="2.4" rx="1" fill="#1a6cd0"/><rect x="9" y="5" width="8.6" height="7" fill="#2a8ce6"/><defs><linearGradient id="ph" x1="0" y1="0" x2="0" y2="1"><stop offset="0" stop-color="#58b8f6"/><stop offset="1" stop-color="#1568c8"/></linearGradient></defs><rect x="2.4" y="1.6" width="9" height="15.2" rx="1.4" fill="url(#ph)"/><path d="M4.4 5H9.4M4.4 8H9.4" stroke="#bfe2fb" stroke-width="0.8" stroke-dasharray="1 0.8"/></svg>
<div style="left:694.3px;top:544px;width:12px;height:12px;background:#1868d8;border-radius:50%;"></div>
<svg style="left:718px;top:547.2px;" width="19.4" height="18" viewBox="0 0 20 19.6"><path d="M14.6 0.2L19.8 2.4V17.2L14.6 19.4Z" fill="#c9a4f4"/><path d="M14.6 0.2L3.2 11.6L0.4 9.8V5.2L2.4 4L14.6 14.6Z" fill="#7a48c4" opacity="0.0"/><path d="M14.6 0.2V5.4L5 12.8L2.6 15L0.2 13.8V5.8L2.6 4.6L5.2 6.8Z" fill="#9b6be0"/><path d="M14.6 19.4V14.2L5.2 6.8L2.6 4.6L0.2 5.8V13.8L2.6 15L5 12.8Z" fill="#6a3cb2"/><path d="M14.6 5.4V14.2L8.8 9.8Z" fill="#e9eaf2"/><path d="M2.4 7.6L4.8 9.8L2.4 12Z" fill="#e9eaf2"/><path d="M14.6 0.2L5.2 6.8L8.8 9.8L14.6 5.4Z" fill="#a678e8"/></svg>
<div style="left:728px;top:557.2px;width:9.6px;height:9.6px;background:#2fb8a8;border-radius:50%;"></div>
<svg style="left:730px;top:559px;" width="5.6" height="6" viewBox="0 0 5.6 6"><path d="M2.8 0.2V4.4M0.6 2.6L2.8 4.8L5 2.6" fill="none" stroke="#fff" stroke-width="1.1"/></svg>
<div style="left:725.9px;top:570px;width:4.7px;height:1.5px;background:#7e7e82;border-radius:1px;"></div>
<div style="left:747.8px;top:541.8px;width:30px;height:30.2px;background:#eff1f5;border-radius:3.5px;border:1px solid #f8f9fb;box-sizing:border-box;"></div>
<svg style="left:753.2px;top:547px;" width="20" height="19.4" viewBox="0 0 20 19.6"><path d="M14.6 0.2L19.8 2.4V17.2L14.6 19.4Z" fill="#c9a4f4"/><path d="M14.6 0.2L3.2 11.6L0.4 9.8V5.2L2.4 4L14.6 14.6Z" fill="#7a48c4" opacity="0.0"/><path d="M14.6 0.2V5.4L5 12.8L2.6 15L0.2 13.8V5.8L2.6 4.6L5.2 6.8Z" fill="#9b6be0"/><path d="M14.6 19.4V14.2L5.2 6.8L2.6 4.6L0.2 5.8V13.8L2.6 15L5 12.8Z" fill="#6a3cb2"/><path d="M14.6 5.4V14.2L8.8 9.8Z" fill="#e9eaf2"/><path d="M2.4 7.6L4.8 9.8L2.4 12Z" fill="#e9eaf2"/><path d="M14.6 0.2L5.2 6.8L8.8 9.8L14.6 5.4Z" fill="#a678e8"/></svg>
<div style="left:756.9px;top:569.6px;width:12px;height:2.4px;background:#1878d8;border-radius:1.2px;"></div>
<svg style="left:788.2px;top:546.8px;" width="20" height="20" viewBox="0 0 20 20"><circle cx="10" cy="10" r="9.6" fill="#f8c020"/><path d="M10 10L1.7 5.2A9.6 9.6 0 0 1 18.3 5.2Z" fill="#e04030"/><path d="M10 0.4A9.6 9.6 0 0 1 18.3 5.2H10Z" fill="#e04030"/><path d="M10 10L1.7 5.2A9.6 9.6 0 0 0 10 19.6L14.2 12.4Z" fill="#30a050"/><circle cx="10" cy="10" r="4.7" fill="#fff"/><circle cx="10" cy="10" r="3.7" fill="#4080f0"/></svg>
<svg style="left:798.8px;top:543.2px;" width="12.8" height="12.8" viewBox="0 0 12.8 12.8"><circle cx="6.4" cy="6.4" r="6.3" fill="#1c1512"/><path d="M3 4.4C4.4 2.4 7.4 2 9 3.6C8 4.2 7.6 5.4 8.4 6.8C7 8.2 5 8.8 3.8 7.8C4.6 6.6 4.2 5.2 3 4.4Z" fill="#8a5a30"/><path d="M7.6 8.4C9 8 10.2 8.6 10.6 9.8C9.6 10.8 8.2 10.8 7.4 10Z" fill="#6a4424"/></svg>
<div style="left:796.2px;top:570px;width:4.6px;height:1.5px;background:#7e7e82;border-radius:1px;"></div>
<svg style="left:870.6px;top:553.6px;" width="9.8" height="5.8" viewBox="0 0 9.8 5.8"><path d="M0.6 5.2L4.9 0.9L9.2 5.2" fill="none" stroke="#2a2a2a" stroke-width="1.3"/></svg>
<svg style="left:894.2px;top:551.8px;" width="13.2" height="9.4" viewBox="0 0 13.2 9.4"><path d="M0.6 3.6C4 0 9.2 0 12.6 3.6" fill="none" stroke="#2a2a2a" stroke-width="1.1"/><path d="M2.6 5.4C5 3 8.2 3 10.6 5.4" fill="none" stroke="#2a2a2a" stroke-width="1.1"/><path d="M4.6 7.2C5.8 6 7.4 6 8.6 7.2" fill="none" stroke="#2a2a2a" stroke-width="1.1"/><circle cx="6.6" cy="8.5" r="0.9" fill="#2a2a2a"/></svg>
<svg style="left:913px;top:552.2px;" width="12.4" height="9.2" viewBox="0 0 12.4 9.2"><path d="M0.6 3.2H2.6L5.4 0.8V8.4L2.6 6H0.6Z" fill="none" stroke="#2a2a2a" stroke-width="1"/><path d="M7 3C7.8 3.8 7.8 5.4 7 6.2" fill="none" stroke="#2a2a2a" stroke-width="0.9"/><path d="M8.6 1.6C10.2 3.2 10.2 6 8.6 7.6" fill="none" stroke="#2a2a2a" stroke-width="0.9"/><path d="M10.4 0.6C12 2.6 12 6.6 10.4 8.6" fill="none" stroke="#9a9a9a" stroke-width="0.8"/></svg>
<svg style="left:932.8px;top:553px;" width="13.2" height="8" viewBox="0 0 13.2 8"><rect x="0.6" y="0.6" width="10.8" height="6.8" rx="1.6" fill="none" stroke="#2a2a2a" stroke-width="1"/><rect x="2" y="2" width="6.6" height="4" rx="0.6" fill="#2a2a2a"/><path d="M12 2.6C12.8 2.8 12.8 5.2 12 5.4Z" fill="#2a2a2a"/></svg>
<div style="left:1018.6px;top:550.4px;width:1px;height:12px;background:#9c9c9c;"></div>
<div style="left:947.9px;top:503.7px;width:75.4px;height:23.3px;background:#eaecf1;border-radius:4px;box-shadow:0 1px 3px rgba(0,0,0,.28);border:1px solid #dcdee4;box-sizing:border-box;"></div>
<span class="t" style="left:32.75px;top:5.14px;font-size:9.4px;color:#262626;letter-spacing:-0.460px;">File</span>
<span class="t" style="left:63.00px;top:5.14px;font-size:9.4px;color:#262626;letter-spacing:-0.045px;">Edit</span>
<span class="t" style="left:95.75px;top:5.14px;font-size:9.4px;color:#262626;letter-spacing:-0.259px;">View</span>
<span class="t" style="left:131.50px;top:5.14px;font-size:9.4px;color:#262626;letter-spacing:-0.094px;">Git</span>
<span class="t" style="left:160.00px;top:5.14px;font-size:9.4px;color:#262626;letter-spacing:-0.067px;">Project</span>
<span class="t" style="left:205.50px;top:5.14px;font-size:9.4px;color:#262626;letter-spacing:-0.135px;">Build</span>
<span class="t" style="left:242.50px;top:5.14px;font-size:9.4px;color:#262626;letter-spacing:0.191px;">Debug</span>
<span class="t" style="left:288.50px;top:5.14px;font-size:9.4px;color:#262626;letter-spacing:-0.558px;">Test</span>
<span class="t" style="left:320.75px;top:5.14px;font-size:9.4px;color:#262626;letter-spacing:-0.171px;">Analyze</span>
<span class="t" style="left:369.75px;top:5.14px;font-size:9.4px;color:#262626;letter-spacing:-0.031px;">Tools</span>
<span class="t" style="left:408.25px;top:5.14px;font-size:9.4px;color:#262626;letter-spacing:-0.222px;">Extensions</span>
<span class="t" style="left:468.75px;top:5.14px;font-size:9.4px;color:#262626;letter-spacing:0.301px;">Window</span>
<span class="t" style="left:520.50px;top:5.14px;font-size:9.4px;color:#262626;letter-spacing:0.062px;">Help</span>
<span class="t" style="left:582.50px;top:4.64px;font-size:9.4px;color:#262626;letter-spacing:-0.494px;">Search</span>
<span class="t" style="left:643.20px;top:5.37px;font-size:9.6px;color:#34457c;letter-spacing:0.185px;-webkit-text-stroke:0.35px;">Isopleth</span>
<span class="t" style="left:873.70px;top:4.61px;font-size:6.6px;color:#dff2df;letter-spacing:-0.025px;">CL</span>
<span class="t" style="left:228.50px;top:30.64px;font-size:9.4px;color:#262626;letter-spacing:-0.601px;">Release</span>
<span class="t" style="left:285.50px;top:30.64px;font-size:9.4px;color:#262626;letter-spacing:0.094px;">Win32</span>
<span class="t" style="left:392.80px;top:30.64px;font-size:9.4px;color:#262626;letter-spacing:0.063px;">Local Windows Debugger</span>
<span class="t" style="left:567.30px;top:30.64px;font-size:9.4px;color:#262626;letter-spacing:-0.026px;">Native Only</span>
<span class="t" style="left:900.00px;top:29.64px;font-size:9.4px;color:#262626;letter-spacing:0.165px;">GitHub Copilot</span>
<span class="t" style="left:7.00px;top:60.24px;font-size:9.4px;color:#1a1a1a;font-weight:700;letter-spacing:-0.094px;">Isobar.cpp</span>
<span class="t" style="left:95.00px;top:60.24px;font-size:9.4px;color:#ffffff;letter-spacing:0.019px;">Isobar.h</span>
<span class="t" style="left:170.80px;top:60.24px;font-size:9.4px;color:#ffffff;letter-spacing:-0.183px;">Git Changes</span>
<span class="t" style="left:20.00px;top:79.54px;font-size:9.4px;color:#262626;letter-spacing:0.061px;">Isopleth</span>
<span class="t" style="left:350.30px;top:79.54px;font-size:9.4px;color:#262626;letter-spacing:-0.080px;">GradeMap</span>
<span class="t" style="left:680.70px;top:79.54px;font-size:9.4px;color:#262626;letter-spacing:0.017px;">Apply_b_Patch(int col, int row, int callparentcol, int callparentrow)</span>
<span class="t" style="left:5.00px;top:462.98px;font-size:9.3px;color:#262626;letter-spacing:-0.417px;">100 %</span>
<span class="t" style="left:100.50px;top:462.98px;font-size:9.3px;color:#262626;letter-spacing:-0.172px;">0</span>
<span class="t" style="left:137.50px;top:462.98px;font-size:9.3px;color:#262626;letter-spacing:-0.312px;">99+</span>
<span class="t" style="left:846.00px;top:462.98px;font-size:9.3px;color:#262626;letter-spacing:-0.227px;">Ln: 1474</span>
<span class="t" style="left:894.50px;top:462.98px;font-size:9.3px;color:#262626;letter-spacing:-0.347px;">Ch: 51</span>
<span class="t" style="left:935.00px;top:462.98px;font-size:9.3px;color:#262626;letter-spacing:-0.545px;">MIXED</span>
<span class="t" style="left:978.00px;top:462.98px;font-size:9.3px;color:#262626;letter-spacing:-1.366px;">CRLF</span>
<span class="t" style="left:7.00px;top:485.74px;font-size:9.4px;color:#ffffff;letter-spacing:0.244px;">Output</span>
<span class="t" style="left:20.00px;top:517.74px;font-size:9.4px;color:#ffffff;letter-spacing:-0.402px;">Ready</span>
<span class="t" style="left:730.90px;top:517.74px;font-size:9.4px;color:#ffffff;letter-spacing:0.124px;">Add to Source Control</span>
<span class="t" style="left:872.50px;top:517.74px;font-size:9.4px;color:#ffffff;letter-spacing:-0.072px;">Select Repository</span>
<span class="t" style="left:210.40px;top:547.05px;font-size:11.1px;color:#555555;letter-spacing:-0.519px;">Search</span>
<span class="t" style="left:974.00px;top:540.87px;font-size:9.9px;color:#2a2a2a;letter-spacing:-0.474px;">5:17 PM</span>
<span class="t" style="left:958.80px;top:553.47px;font-size:9.9px;color:#2a2a2a;letter-spacing:-0.170px;">2025-10-22</span>
<span class="t" style="left:742.50px;top:27.71px;font-size:6.6px;color:#3c3c44;font-weight:700;letter-spacing:-0.310px;">abc</span>
<span class="t" style="left:982.70px;top:521.17px;font-size:7px;color:#ffffff;font-weight:700;letter-spacing:-0.706px;">1</span>
<span class="t" style="left:28.40px;top:539.56px;font-size:8.2px;color:#ffffff;font-weight:700;letter-spacing:0.138px;">2</span>
<span class="t" style="left:697.40px;top:540.21px;font-size:9.2px;color:#ffffff;letter-spacing:-0.225px;">6</span>
<span class="t" style="left:954.40px;top:506.14px;font-size:10px;color:#343434;letter-spacing:-0.176px;">Show desktop</span>
<div id="code"><div id="clip">
<div style="position:absolute;left:95.30px;top:0.00px;width:0;height:349.70px;border-left:1px dashed #d8d8d8;"></div>
<div style="position:absolute;left:119.65px;top:0.00px;width:0;height:322.49px;border-left:1px dashed #d8d8d8;"></div>
<div style="position:absolute;left:144.00px;top:0.00px;width:0;height:308.89px;border-left:1px dashed #d8d8d8;"></div>
<div style="position:absolute;left:168.36px;top:186.45px;width:0;height:108.83px;border-left:1px dashed #d8d8d8;"></div>
<div style="position:absolute;left:192.71px;top:200.06px;width:0;height:27.21px;border-left:1px dashed #d8d8d8;"></div>
<div style="position:absolute;left:93.5px;top:268.3px;width:893.5px;height:12px;border:1.4px solid #e7e7f1;box-sizing:border-box;"></div>
<div style="position:absolute;left:83.1px;top:0;width:1px;height:362.9px;background:#a5a5a5;"></div>
<div style="position:absolute;left:83.6px;top:22.299999999999997px;width:3.5px;height:1px;background:#a5a5a5;"></div>
<div style="position:absolute;left:83.6px;top:141.1px;width:3.5px;height:1px;background:#a5a5a5;"></div>
<div style="position:absolute;left:83.6px;top:160.0px;width:3.5px;height:1px;background:#a5a5a5;"></div>
<div style="position:absolute;left:83.6px;top:240.5px;width:3.5px;height:1px;background:#a5a5a5;"></div>
<div style="position:absolute;left:83.6px;top:253.3px;width:3.5px;height:1px;background:#a5a5a5;"></div>
<div style="position:absolute;left:83.6px;top:307.9px;width:3.5px;height:1px;background:#a5a5a5;"></div>
<div style="position:absolute;left:83.6px;top:321.7px;width:3.5px;height:1px;background:#a5a5a5;"></div>
<div style="position:absolute;left:83.6px;top:335.1px;width:3.5px;height:1px;background:#a5a5a5;"></div>
<div style="position:absolute;left:83.6px;top:361.9px;width:3.5px;height:1px;background:#a5a5a5;"></div>
<svg style="position:absolute;left:78.6px;top:-3.10px" width="10" height="10" viewBox="0 0 10 10"><rect x="0" y="0" width="10" height="10" fill="#fff"/><path d="M1.6 3.4L5 6.8L8.4 3.4" stroke="#555" stroke-width="1" fill="none"/></svg>
<svg style="position:absolute;left:78.6px;top:119.33px" width="10" height="10" viewBox="0 0 10 10"><rect x="0" y="0" width="10" height="10" fill="#fff"/><path d="M1.6 3.4L5 6.8L8.4 3.4" stroke="#555" stroke-width="1" fill="none"/></svg>
<svg style="position:absolute;left:78.6px;top:146.54px" width="10" height="10" viewBox="0 0 10 10"><rect x="0" y="0" width="10" height="10" fill="#fff"/><path d="M1.6 3.4L5 6.8L8.4 3.4" stroke="#555" stroke-width="1" fill="none"/></svg>
<svg style="position:absolute;left:78.6px;top:173.75px" width="10" height="10" viewBox="0 0 10 10"><rect x="0" y="0" width="10" height="10" fill="#fff"/><path d="M1.6 3.4L5 6.8L8.4 3.4" stroke="#555" stroke-width="1" fill="none"/></svg>
<svg style="position:absolute;left:78.6px;top:187.35px" width="10" height="10" viewBox="0 0 10 10"><rect x="0" y="0" width="10" height="10" fill="#fff"/><path d="M1.6 3.4L5 6.8L8.4 3.4" stroke="#555" stroke-width="1" fill="none"/></svg>
<svg style="position:absolute;left:78.6px;top:255.37px" width="10" height="10" viewBox="0 0 10 10"><rect x="0" y="0" width="10" height="10" fill="#fff"/><path d="M1.6 3.4L5 6.8L8.4 3.4" stroke="#555" stroke-width="1" fill="none"/></svg>
<div class="ln" style="left:20.0px;top:-5.51px;">1454</div>
<div class="cl" style="left:168.06px;top:-6.31px">*<span class="p">loc</span> = 255;<span class="c">//stop further processing on revisitation by neighbour bit</span></div>
<div class="ln" style="left:20.0px;top:8.09px;">1455</div>
<div class="cl" style="left:168.06px;top:7.29px"><span class="c">//start to search offspring neighbours on grade change</span></div>
<div class="ln" style="left:20.0px;top:21.69px;">1456</div>
<div class="cl" style="left:168.06px;top:20.89px"><span class="k">if</span> (<span class="p">col</span> &lt; m_b_maxc &amp;&amp; !(<span class="p">callparentcol</span> == <span class="p">col</span> + 1 &amp;&amp; <span class="p">callparentrow</span> == <span class="p">row</span>))</div>
<div class="ln" style="left:20.0px;top:35.30px;">1457</div>
<div class="cl" style="left:192.41px;top:34.50px"><span class="v">bContinue</span> = <span class="f">Apply_b_Patch</span>(<span class="p">col</span> + 1, <span class="p">row</span>, <span class="p">col</span>, <span class="p">row</span>);<span class="c">//test right-same row at col+1</span></div>
<div class="ln" style="left:20.0px;top:48.90px;">1458</div>
<div class="cl" style="left:168.06px;top:48.10px"><span class="k">if</span> (<span class="v">bContinue</span> &amp;&amp; <span class="p">row</span> &lt; m_b_maxr &amp;&amp; !(<span class="p">callparentcol</span> == <span class="p">col</span> &amp;&amp; <span class="p">callparentrow</span> == <span class="p">row</span> + 1))</div>
<div class="ln" style="left:20.0px;top:62.51px;">1459</div>
<div class="cl" style="left:192.41px;top:61.71px"><span class="v">bContinue</span> = <span class="f">Apply_b_Patch</span>(<span class="p">col</span>, <span class="p">row</span> + 1, <span class="p">col</span>, <span class="p">row</span>);<span class="c">//test downward-same col at row+1</span></div>
<div class="ln" style="left:20.0px;top:76.11px;">1460</div>
<div class="cl" style="left:168.06px;top:75.31px"><span class="k">if</span> (<span class="v">bContinue</span> &amp;&amp; <span class="p">row</span> &gt; 1 &amp;&amp; !(<span class="p">callparentcol</span> == <span class="p">col</span> &amp;&amp; <span class="p">callparentrow</span> == <span class="p">row</span> - 1))</div>
<div class="ln" style="left:20.0px;top:89.71px;">1461</div>
<div class="cl" style="left:192.41px;top:88.91px"><span class="v">bContinue</span> = <span class="f">Apply_b_Patch</span>(<span class="p">col</span>, <span class="p">row</span> - 1, <span class="p">col</span>, <span class="p">row</span>);<span class="c">//test upward-same col at row-1</span></div>
<div class="ln" style="left:20.0px;top:103.32px;">1462</div>
<div class="cl" style="left:168.06px;top:102.52px"><span class="k">if</span> (<span class="v">bContinue</span> &amp;&amp; <span class="p">col</span>&gt;1 &amp;&amp; !(<span class="p">callparentcol</span> == <span class="p">col</span> - 1 &amp;&amp; <span class="p">callparentrow</span> == <span class="p">row</span>))</div>
<div class="ln" style="left:20.0px;top:116.92px;">1463</div>
<div class="cl" style="left:192.41px;top:116.12px"><span class="v">bContinue</span> = <span class="f">Apply_b_Patch</span>(<span class="p">col</span>-1,<span class="p">row</span>,<span class="p">col</span>,<span class="p">row</span>);<span class="c">//test left-same row at col-1</span></div>
<div class="ln" style="left:20.0px;top:130.53px;">1464</div>
<div class="cl" style="left:168.06px;top:129.73px"><span class="c">//finish all neighbour search and call return to parent at where parent's call this function with arguements col, row</span></div>
<div class="ln" style="left:20.0px;top:144.13px;">1465</div>
<div class="cl" style="left:143.70px;top:143.33px">}<span class="k">else</span> {<span class="c">//hit grade boundary</span></div>
<div class="ln" style="left:20.0px;top:157.73px;">1466</div>
<div class="cl" style="left:168.06px;top:156.93px"><span class="b">bool</span> <span class="v">bAdd</span> = <span class="b">true</span>;</div>
<div class="ln" style="left:20.0px;top:171.34px;">1467</div>
<div class="cl" style="left:168.06px;top:170.54px"><span class="k">for</span> (<span class="b">int</span> <span class="v">k</span> = 0; <span class="v">k</span> &lt;m_isoRow.<span class="f">GetSize</span>(); <span class="v">k</span>++){<span class="c">//scan queue</span></div>
<div class="ln" style="left:20.0px;top:184.94px;">1468</div>
<div class="cl" style="left:192.41px;top:184.14px"><span class="k">if</span> (<span class="p">col</span> == m_isoCol<span class="o">[</span><span class="v">k</span><span class="o">]</span> &amp;&amp; <span class="p">row</span> == m_isoRow<span class="o">[</span><span class="v">k</span><span class="o">]</span>){<span class="c">//same contour change location already recorded</span></div>
<div class="ln" style="left:20.0px;top:198.55px;">1469</div>
<div class="cl" style="left:216.76px;top:197.75px"><span class="v">bAdd</span> = <span class="b">false</span>;</div>
<div class="ln" style="left:20.0px;top:212.15px;">1470</div>
<div class="cl" style="left:216.76px;top:211.35px"><span class="k">break</span>;</div>
<div class="ln" style="left:20.0px;top:225.75px;">1471</div>
<div class="cl" style="left:192.41px;top:224.95px">}</div>
<div class="ln" style="left:20.0px;top:239.36px;">1472</div>
<div class="cl" style="left:168.06px;top:238.56px">}</div>
<div class="ln" style="left:20.0px;top:252.96px;">1473</div>
<div class="cl" style="left:168.06px;top:252.16px"><span class="k">if</span> (<span class="v">bAdd</span>){<span class="c">//add contour location (col, row) to queue array</span></div>
<div class="ln" style="left:20.0px;top:266.57px;color:#111;">1474</div>
<div class="cl" style="left:192.41px;top:265.77px">m_isoRow.<span class="f">Add</span>((<span class="b">unsigned</span> <span class="b">short</span>)<span class="p">row</span>);</div>
<div class="ln" style="left:20.0px;top:280.17px;">1475</div>
<div class="cl" style="left:192.41px;top:279.37px">m_isoCol.<span class="f">Add</span>((<span class="b">unsigned</span> <span class="b">short</span>)<span class="p">col</span>);</div>
<div class="ln" style="left:20.0px;top:293.77px;">1476</div>
<div class="cl" style="left:168.06px;top:292.97px">}<span class="c">//must be happening in offspring, call return to parent to continue searching parent's other neighbours</span></div>
<div class="ln" style="left:20.0px;top:307.38px;">1477</div>
<div class="cl" style="left:143.70px;top:306.58px">}</div>
<div class="ln" style="left:20.0px;top:320.98px;">1478</div>
<div class="cl" style="left:119.35px;top:320.18px">}</div>
<div class="ln" style="left:20.0px;top:334.59px;">1479</div>
<div class="cl" style="left:119.35px;top:333.79px"><span class="k">return</span> <span class="v">bContinue</span>;</div>
<div class="ln" style="left:20.0px;top:348.19px;">1480</div>
<div class="cl" style="left:95.00px;top:347.39px">}</div>
<div class="ln" style="left:20.0px;top:361.79px;">1481</div>
<div class="cl" style="left:95.00px;top:360.99px"><span class="b">void</span> <span class="y">GradeMap</span>::<span class="f">sortCol</span>(){<span class="c">//bubble sort on column</span></div>
</div></div>
</div>
</body></html>
